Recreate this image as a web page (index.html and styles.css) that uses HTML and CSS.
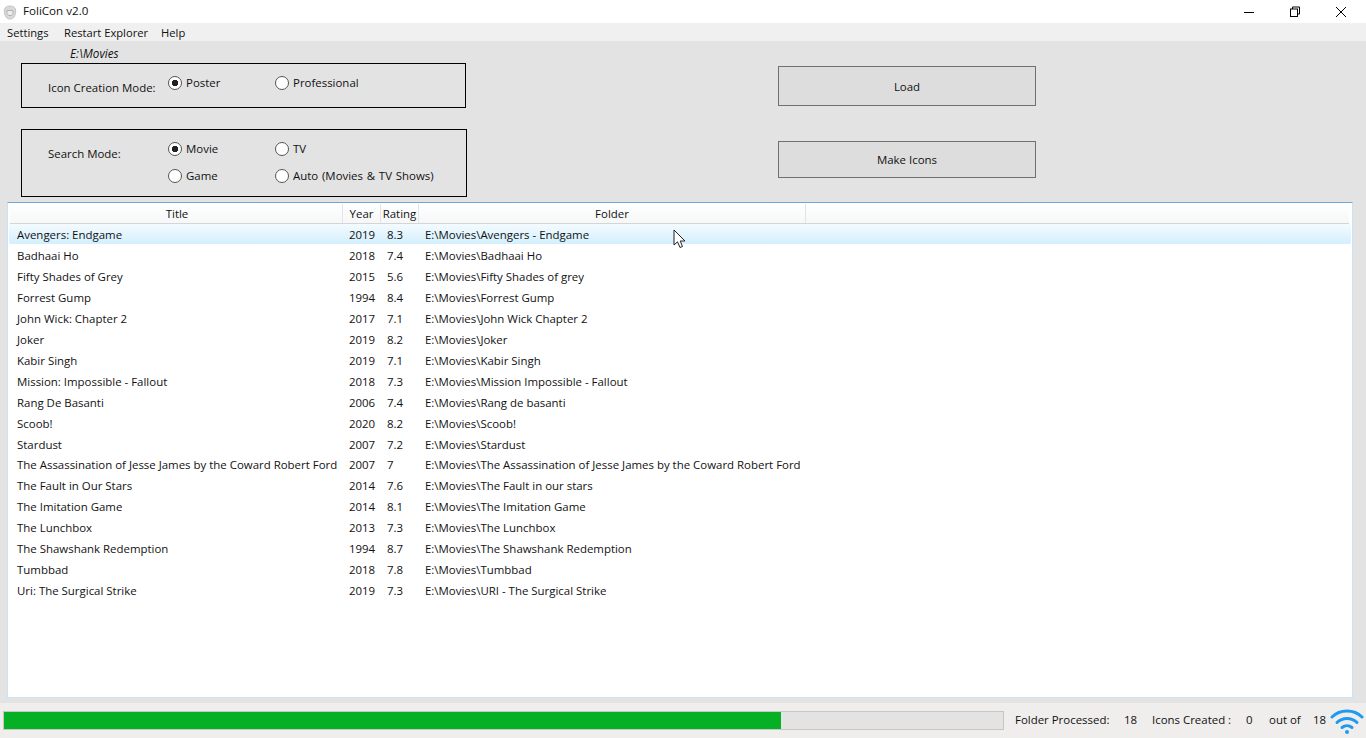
FILE: index.html
```html
<!DOCTYPE html>
<html lang="en">
<head>
<meta charset="utf-8">
<title>FoliCon v2.0</title>
<link rel="stylesheet" href="styles.css">
</head>
<body>
<div class="window">
  <header class="titlebar">
    <div class="title-left">
      <svg class="app-icon" width="16" height="16" viewBox="0 0 16 16"><path d="M3.500 3.500C5 1.500 11 1.500 12.500 3.500C14 5 14 9 13 11C12 14 10 15 8 15C6 15 4 14 3 11C2 9 2 5 3.500 3.500Z" fill="#d9d9d9" stroke="#c4c4c4"/><path d="M5 6.500H11V9.500L9.500 11.500H6.500L5 9.500Z" fill="#ededed" stroke="#a6a6a6" stroke-width=".8"/></svg>
      <span class="title-text">FoliCon v2.0</span>
    </div>
    <div class="win-controls">
      <svg width="12" height="12" viewBox="0 0 12 12"><path d="M1 6.500H11" stroke="#000"/></svg>
      <svg width="12" height="12" viewBox="0 0 12 12" fill="none"><path d="M3.500 3V1H10.500V8H8.500" stroke="#000"/><rect x="1.500" y="3" width="7" height="7.500" stroke="#000"/></svg>
      <svg width="12" height="12" viewBox="0 0 12 12"><path d="M1 1L11 11M11 1L1 11" stroke="#000"/></svg>
    </div>
  </header>
  <nav class="menubar"><span>Settings</span><span>Restart Explorer</span><span class="menu-help">Help</span></nav>
  <main class="content">
    <div class="path">E:\Movies</div>
    <section class="controls">
      <div class="groups">
        <div class="group group-icon">
          <span class="group-label">Icon Creation Mode:</span>
          <div class="radios">
            <span class="radio on">Poster</span>
            <span class="radio">Professional</span>
          </div>
        </div>
        <div class="group group-search">
          <span class="group-label">Search Mode:</span>
          <div class="radios">
            <span class="radio on">Movie</span>
            <span class="radio">TV</span>
            <span class="radio">Game</span>
            <span class="radio radio-auto">Auto (Movies &amp; TV Shows)</span>
          </div>
        </div>
      </div>
      <div class="buttons">
        <button class="btn btn-load">Load</button>
        <button class="btn btn-make">Make Icons</button>
      </div>
    </section>
    <section class="list">
      <div class="row head">
        <span class="c-title">Title</span><span class="c-year">Year</span><span class="c-rating">Rating</span><span class="c-folder">Folder</span><span class="c-rest"></span>
      </div>
      <div class="row hover"><span class="c-title">Avengers: Endgame</span><span class="c-year">2019</span><span class="c-rating">8.3</span><span class="c-folder">E:\Movies\Avengers - Endgame</span></div>
      <div class="row"><span class="c-title">Badhaai Ho</span><span class="c-year">2018</span><span class="c-rating">7.4</span><span class="c-folder">E:\Movies\Badhaai Ho</span></div>
      <div class="row"><span class="c-title">Fifty Shades of Grey</span><span class="c-year">2015</span><span class="c-rating">5.6</span><span class="c-folder">E:\Movies\Fifty Shades of grey</span></div>
      <div class="row"><span class="c-title">Forrest Gump</span><span class="c-year">1994</span><span class="c-rating">8.4</span><span class="c-folder">E:\Movies\Forrest Gump</span></div>
      <div class="row"><span class="c-title">John Wick: Chapter 2</span><span class="c-year">2017</span><span class="c-rating">7.1</span><span class="c-folder">E:\Movies\John Wick Chapter 2</span></div>
      <div class="row"><span class="c-title">Joker</span><span class="c-year">2019</span><span class="c-rating">8.2</span><span class="c-folder">E:\Movies\Joker</span></div>
      <div class="row"><span class="c-title">Kabir Singh</span><span class="c-year">2019</span><span class="c-rating">7.1</span><span class="c-folder">E:\Movies\Kabir Singh</span></div>
      <div class="row"><span class="c-title">Mission: Impossible - Fallout</span><span class="c-year">2018</span><span class="c-rating">7.3</span><span class="c-folder">E:\Movies\Mission Impossible - Fallout</span></div>
      <div class="row"><span class="c-title">Rang De Basanti</span><span class="c-year">2006</span><span class="c-rating">7.4</span><span class="c-folder">E:\Movies\Rang de basanti</span></div>
      <div class="row"><span class="c-title">Scoob!</span><span class="c-year">2020</span><span class="c-rating">8.2</span><span class="c-folder">E:\Movies\Scoob!</span></div>
      <div class="row"><span class="c-title">Stardust</span><span class="c-year">2007</span><span class="c-rating">7.2</span><span class="c-folder">E:\Movies\Stardust</span></div>
      <div class="row row-tight"><span class="c-title">The Assassination of Jesse James by the Coward Robert Ford</span><span class="c-year">2007</span><span class="c-rating">7</span><span class="c-folder">E:\Movies\The Assassination of Jesse James by the Coward Robert Ford</span></div>
      <div class="row"><span class="c-title">The Fault in Our Stars</span><span class="c-year">2014</span><span class="c-rating">7.6</span><span class="c-folder">E:\Movies\The Fault in our stars</span></div>
      <div class="row"><span class="c-title">The Imitation Game</span><span class="c-year">2014</span><span class="c-rating">8.1</span><span class="c-folder">E:\Movies\The Imitation Game</span></div>
      <div class="row"><span class="c-title">The Lunchbox</span><span class="c-year">2013</span><span class="c-rating">7.3</span><span class="c-folder">E:\Movies\The Lunchbox</span></div>
      <div class="row"><span class="c-title">The Shawshank Redemption</span><span class="c-year">1994</span><span class="c-rating">8.7</span><span class="c-folder">E:\Movies\The Shawshank Redemption</span></div>
      <div class="row"><span class="c-title">Tumbbad</span><span class="c-year">2018</span><span class="c-rating">7.8</span><span class="c-folder">E:\Movies\Tumbbad</span></div>
      <div class="row"><span class="c-title">Uri: The Surgical Strike</span><span class="c-year">2019</span><span class="c-rating">7.3</span><span class="c-folder">E:\Movies\URI - The Surgical Strike</span></div>
      <svg class="cursor" width="13" height="20" viewBox="0 0 13 20"><path d="M1 1V16L4.500 12.800L7 18.500L9.500 17.500L7.200 12H12Z" fill="#fff" stroke="#222" stroke-linejoin="round"/></svg>
    </section>
  </main>
  <footer class="status">
    <div class="progress"><div class="progress-fill" style="width:77.8%"></div></div>
    <span class="s-text s-folder">Folder Processed:</span><span class="s-text s-n1">18</span>
    <span class="s-text s-icons">Icons Created :</span><span class="s-text s-n2">0</span>
    <span class="s-text s-out">out of</span><span class="s-text s-n3">18</span>
    <svg class="wifi" width="34" height="26" viewBox="0 0 34 26" fill="none" stroke="#1e9bf0" stroke-width="3" stroke-linecap="round"><path d="M2 9C10 1 24 1 32 9"/><path d="M7 14.500C12.500 9 21.500 9 27 14.500"/><path d="M12 19.500C15 17 19 17 22 19.500"/><circle cx="17" cy="24" r="2" fill="#1e9bf0" stroke="none"/></svg>
  </footer>
</div>
</body>
</html>
```
FILE: styles.css
```css
* { box-sizing: border-box; }
html, body { margin: 0; height: 100%; overflow: hidden; }
body { font: 11.45px/16px "Open Sans", "Noto Sans", sans-serif; color: #111; background: #e3e3e3; }
.window { width: 1366px; height: 738px; display: flex; flex-direction: column; }

.titlebar { height: 23px; background: #fff; display: flex; justify-content: space-between; align-items: center; flex: none; }
.title-left { display: flex; align-items: center; gap: 5px; padding-left: 2px; font-size: 11.6px; }
.title-text { margin-bottom: 2px; }
.app-icon { flex: none; }
.win-controls { display: flex; gap: 34px; padding-right: 19px; align-items: center; }

.menubar { height: 18px; background: #f0f0f0; display: flex; gap: 15.5px; padding: 1px 0 0 7px; align-items: center; flex: none; font-size: 11.2px; }
.menu-help { margin-left: -2.500px; }

.content { flex: 1; display: flex; flex-direction: column; padding: 4px 13px 0 7px; min-height: 0; }
.path { font-style: italic; padding-left: 63px; height: 18px; font-size: 11.7px; line-height: 16px; }

.controls { display: flex; height: 139px; flex: none; }
.groups { display: flex; flex-direction: column; gap: 21px; padding-left: 14px; width: 771px; }
.group { border: 1px solid #000; display: flex; padding-left: 26px; }
.group-icon { width: 445px; height: 45px; }
.group-search { width: 446px; height: 68px; }
.group-label { width: 120px; padding-top: 16px; flex: none; }
.radios { display: grid; grid-template-columns: 107px auto; grid-auto-rows: 27px; padding-top: 10px; }
.radio { display: flex; align-items: flex-start; gap: 4px; height: 18px; line-height: 18px; }
.radio::before { content: ""; width: 12px; height: 12px; margin-top: 2px; border: 1px solid #555; border-radius: 50%; background: #fff; flex: none; }
.radio.on::before { background: radial-gradient(circle, #222 0 3px, #fff 3.500px); }
.radio-auto { word-spacing: 0.8px; }

.buttons { display: flex; flex-direction: column; gap: 35px; padding-top: 3px; }
.btn { width: 258px; background: #dddddd; border: 1px solid #707070; font: inherit; color: #111; padding: 1px 0 0; }
.btn-load { height: 40px; }
.btn-make { height: 37px; }

.list { height: 496px; flex: none; background: #fff; border: 1px solid #c6e4f5; border-top-color: #6fa8d6; padding: 1px 2px 0; position: relative; width: 1346px; }
.row { display: flex; height: 21px; align-items: center; }
.row-tight { margin-top: -1px; }
.head { height: 20px; margin-right: 1px; background: linear-gradient(#fff, #f6f7f8); border-bottom: 1px solid #d5d5d5; }
.head span { text-align: center; height: 19px; line-height: 19px; border-right: 1px solid #e3e4e5; }
.c-title { width: 333px; padding-left: 7px; white-space: nowrap; flex: none; }
.c-year { width: 38px; padding-left: 6px; flex: none; }
.c-rating { width: 38px; padding-left: 6px; flex: none; }
.c-folder { width: 388px; padding-left: 6px; white-space: nowrap; flex: none; }
.head .c-title { padding-left: 2px; }
.head .c-year, .head .c-rating { padding-left: 0; }
.head .c-folder { padding-left: 0; width: 387px; }
.head .c-rest { flex: 1; border-right: 0; }
.hover { height: 20px; margin: 0 -1px 1px; padding: 1px 0 0 1px; background: linear-gradient(#f4fbff, #d3effd); border-radius: 2px; }
.cursor { position: absolute; left: 665px; top: 26px; }

.status { height: 35px; flex: none; margin-top: 5px; background: #f0eded; display: flex; align-items: center; padding: 0 0 0 3px; }
.progress { width: 1001px; height: 19px; background: #e3e3e3; border: 1px solid #c6c6c6; }
.progress-fill { height: 100%; background: #06b025; }
.s-text { margin-bottom: 2px; }
.s-folder { margin-left: 11px; width: 109px; }
.s-n1 { width: 28px; }
.s-icons { width: 94px; }
.s-n2 { width: 23px; }
.s-out { width: 44px; }
.s-n3 { width: 17px; }
.wifi { flex: none; }
```
